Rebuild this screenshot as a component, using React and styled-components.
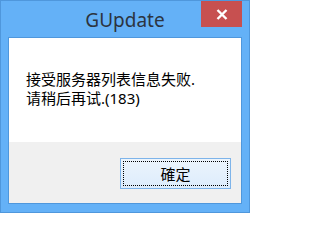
import React from 'react';
import styled, { createGlobalStyle } from 'styled-components';

const GlobalStyle = createGlobalStyle`
    html, body {
        margin: 0;
        padding: 0;
        background: #ffffff;
    }
    * {
        box-sizing: border-box;
    }
`;

const Window = styled.div`
    width: 250px;
    height: 213px;
    border: 1px solid #4f97dc;
    background-color: #64b1f7;
    display: flex;
    flex-direction: column;
    font-family: "Noto Sans", "Noto Sans CJK SC", sans-serif;
`;

const TitleBar = styled.div`
    height: 36px;
    display: grid;
    grid-template-columns: 1fr auto 1fr;
    align-items: start;
`;

const Title = styled.div`
    grid-column: 2;
    font-size: 19px;
    line-height: 36px;
    color: #2c3440;
    padding-top: 1px;
`;

const CloseButton = styled.div`
    grid-column: 3;
    justify-self: end;
    width: 41px;
    height: 26px;
    margin-right: 7px;
    background-color: #c75050;
    display: flex;
    align-items: center;
    justify-content: center;
`;

const Body = styled.div`
    flex: 1;
    margin: 0 7px 8px 7px;
    border: 1px solid #4f97dc;
    display: flex;
    flex-direction: column;
`;

const Message = styled.div`
    height: 104px;
    background-color: #ffffff;
    padding: 32px 0 0 17px;
    font-size: 15px;
    line-height: 19px;
    color: #000000;
`;

const Footer = styled.div`
    flex: 1;
    background-color: #f0f0f0;
    display: flex;
    justify-content: flex-end;
    align-items: flex-start;
    padding: 16px 10px 0 0;
`;

const Button = styled.button`
    position: relative;
    width: 111px;
    height: 31px;
    border: 1px solid #7eb4ea;
    background: linear-gradient(to bottom, #ecf4fc, #dcecfc);
    font-family: "Noto Sans CJK TC", "Noto Sans CJK SC", sans-serif;
    font-size: 15px;
    color: #000000;
    padding: 0;

    &::after {
        content: '';
        position: absolute;
        inset: 2px;
        border: 1px dotted #000000;
    }
`;

export default function App() {
    return (
        <>
            <GlobalStyle />
            <Window>
                <TitleBar>
                    <Title>GUpdate</Title>
                    <CloseButton>
                        <svg width="12" height="11" viewBox="0 0 12 11">
                            <path d="M1.5 1 L10.5 10 M10.5 1 L1.5 10" stroke="#ffffff" strokeWidth="2.4" />
                        </svg>
                    </CloseButton>
                </TitleBar>
                <Body>
                    <Message>
                        接受服务器列表信息失败.
                        <br />
                        请稍后再试.(183)
                    </Message>
                    <Footer>
                        <Button>確定</Button>
                    </Footer>
                </Body>
            </Window>
        </>
    );
}
